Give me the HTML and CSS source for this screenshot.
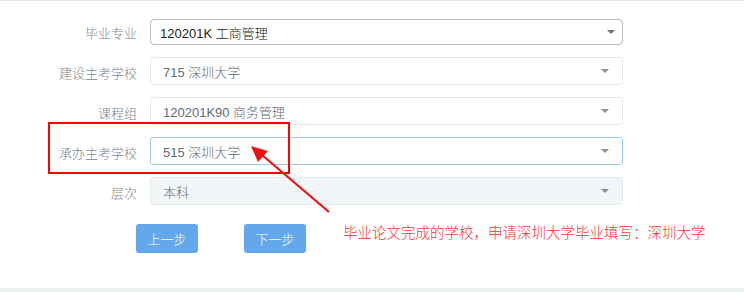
FILE: index.html
```html
<!DOCTYPE html>
<html lang="zh-CN">
<head>
<meta charset="utf-8">
<link rel="stylesheet" href="styles.css">
</head>
<body>
<div class="page">
  <div class="form">
    <div class="row">
      <label class="label">毕业专业</label>
      <div class="select native"><span class="val dark">120201K 工商管理</span><span class="caret"></span></div>
    </div>
    <div class="row">
      <label class="label">建设主考学校</label>
      <div class="select"><span class="val">715 深圳大学</span><span class="caret"></span></div>
    </div>
    <div class="row">
      <label class="label">课程组</label>
      <div class="select"><span class="val">120201K90 商务管理</span><span class="caret"></span></div>
    </div>
    <div class="row">
      <label class="label">承办主考学校</label>
      <div class="select focus"><span class="val">515 深圳大学</span><span class="caret"></span></div>
    </div>
    <div class="row">
      <label class="label">层次</label>
      <div class="select disabled"><span class="val">本科</span><span class="caret"></span></div>
    </div>
    <div class="actions">
      <button class="btn">上一步</button>
      <button class="btn">下一步</button>
      <span class="note">毕业论文完成的学校，申请深圳大学毕业填写：深圳大学</span>
    </div>
  </div>
  <div class="highlight"></div>
  <svg class="arrow" width="744" height="292" viewBox="0 0 744 292">
    <line x1="329" y1="212" x2="262" y2="155" stroke="#f01010" stroke-width="2.2"/>
    <polygon points="251,146 268,151 258,162" fill="#f01010"/>
  </svg>
</div>
<div class="footer"></div>
</body>
</html>
```
FILE: styles.css
```css
html, body {
  margin: 0;
  padding: 0;
  background: #fff;
}
body {
  width: 744px;
  height: 292px;
  overflow: hidden;
  font-family: "Liberation Sans", "Noto Sans CJK SC", sans-serif;
  font-size: 13px;
  font-weight: 300;
}
.page {
  position: relative;
  height: 288px;
  border-top: 1px solid #e6e8e8;
  box-sizing: border-box;
}
.form {
  padding-top: 16px;
  display: flex;
  flex-direction: column;
  gap: 12px;
}
.row {
  display: flex;
  align-items: center;
  height: 28px;
}
.label {
  width: 137px;
  text-align: right;
  color: #7a858f;
  margin-right: 13px;
  padding-top: 2px;
}
.select {
  position: relative;
  width: 473px;
  height: 28px;
  box-sizing: border-box;
  border: 1px solid #e4eaec;
  border-radius: 3px;
  display: flex;
  align-items: center;
  padding-left: 12px;
  background: #fff;
}
.select.native {
  height: 26px;
  align-self: flex-start;
  margin-top: 2px;
  border-color: #b8b8b8;
  border-radius: 4px;
  padding-left: 9px;
}
.select.focus {
  border-color: #9ccbf2;
}
.select.disabled {
  background: #f3f6f8;
}
.val {
  color: #5f6b75;
}
.val.dark {
  color: #222;
}
.caret {
  position: absolute;
  right: 13px;
  top: 50%;
  margin-top: -2px;
  width: 0;
  height: 0;
  border-left: 4px solid transparent;
  border-right: 4px solid transparent;
  border-top: 4px solid #888e94;
}
.select.native .caret {
  right: 7px;
  border-top-color: #707070;
}
.actions {
  display: flex;
  align-items: flex-start;
  margin-top: 7px;
  padding-left: 136px;
  height: 29px;
}
.btn {
  width: 62px;
  height: 29px;
  border: 0;
  border-radius: 3px;
  background: #62a8ea;
  color: #fff;
  font-family: "Liberation Sans", "Noto Sans CJK SC", sans-serif;
  font-size: 13px;
  font-weight: 300;
  padding: 0;
  margin-right: 46px;
}
.btn + .btn {
  margin-right: 0;
}
.note {
  margin-left: 37px;
  margin-top: -1px;
  color: #f43333;
  font-size: 14.5px;
  line-height: 21px;
}
.highlight {
  position: absolute;
  left: 48px;
  top: 121px;
  width: 242px;
  height: 52px;
  border: 2px solid #f00;
  box-sizing: border-box;
}
.arrow {
  position: absolute;
  left: 0;
  top: -1px;
}
.footer {
  height: 4px;
  background: #edf0f0;
}
```
